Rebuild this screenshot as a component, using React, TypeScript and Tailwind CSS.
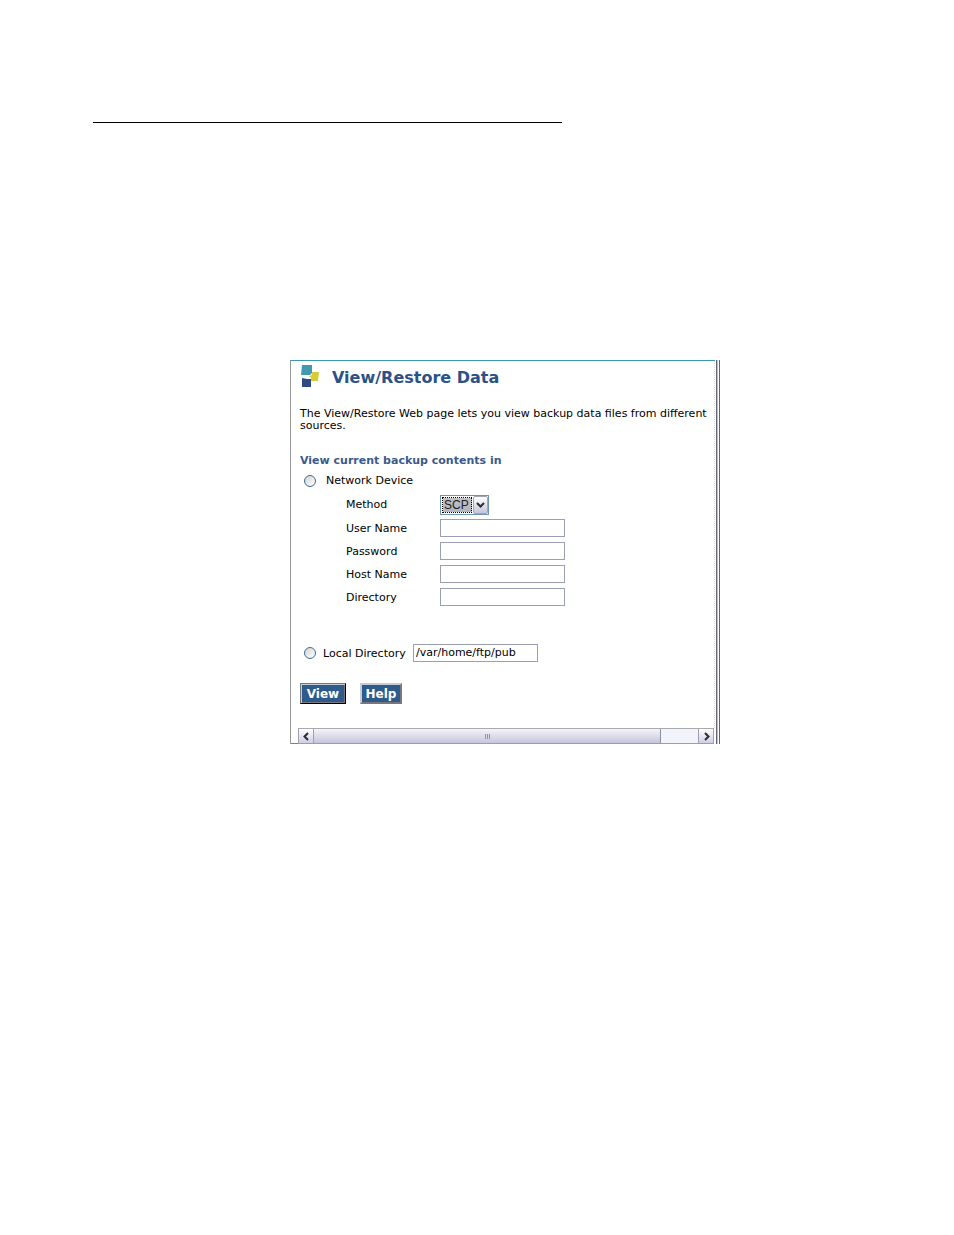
import React, { useState } from 'react';

const fields = [
    { id: 'user', label: 'User Name', type: 'text' },
    { id: 'password', label: 'Password', type: 'password' },
    { id: 'host', label: 'Host Name', type: 'text' },
    { id: 'directory', label: 'Directory', type: 'text' },
];

const inputClass = 'h-[18px] w-[125px] border border-[#9a9fb4] bg-white px-0.5 pb-0.5 text-[11px] outline-none';
const radioClass =
    'size-3 shrink-0 appearance-none rounded-full border border-[#3f6a94] bg-linear-to-br from-[#d4d4d0] to-white checked:border-4';

function Logo() {
    return (
        <svg className="h-[22px] w-[18px] shrink-0" viewBox="0 0 18 22" aria-hidden="true">
            <path d="M1 0h10v8L9 10H0z" fill="#4099ad" />
            <path d="M11 7h7l-1 9h-7v-4H8l2-2h1z" fill="#d5cb3b" />
            <path d="M1 13l5 1h4v8H1z" fill="#2f4b82" />
        </svg>
    );
}

function Arrow({ className, d }: { className: string; d: string }) {
    return (
        <svg className={className} viewBox="0 0 9 9" fill="none" stroke="#2b2b35" strokeWidth="2" aria-hidden="true">
            <path d={d} />
        </svg>
    );
}

function ScrollBar() {
    return (
        <div className="flex h-4 border-y border-t-[#a9a9ae] border-b-[#9d9da6] bg-[#f3f3fb]">
            <button aria-label="Scroll left" className="flex w-4 items-center justify-center border-x border-[#a0a0b4] bg-linear-to-b from-white to-[#cfcfe2]">
                <Arrow className="size-[9px]" d="M6 1 2.5 4.5 6 8" />
            </button>
            <div className="flex w-[347px] items-center justify-center gap-px border-r border-[#8d8da6] bg-linear-to-b from-[#f4f4f8] to-[#c6c6dc]">
                <span className="h-[5px] w-px bg-[#9292a0]" />
                <span className="h-[5px] w-px bg-[#9292a0]" />
                <span className="h-[5px] w-px bg-[#9292a0]" />
            </div>
            <button aria-label="Scroll right" className="ml-auto flex w-4 items-center justify-center border-x border-[#a0a0b4] bg-linear-to-b from-white to-[#cfcfe2]">
                <Arrow className="size-[9px]" d="M3 1l3.5 3.5L3 8" />
            </button>
        </div>
    );
}

export default function App() {
    const [source, setSource] = useState('');
    const [path, setPath] = useState('/var/home/ftp/pub');

    return (
        <main className="min-h-screen bg-white pt-[122px] pr-8 pb-8 pl-[93px] font-['DejaVu_Sans',sans-serif] text-[11px] leading-3 text-black">
            <hr className="max-w-[469px] border-black" />

            <section className="mt-[237px] ml-[197px] flex max-w-[430px]">
                <form
                    className="min-w-0 grow border-t border-l border-t-[#3a98b4] border-l-[#999999]"
                    onSubmit={(e) => e.preventDefault()}
                >
                    <div className="border-r border-dotted border-[#dcdcc0] pr-1.5 pl-[9px]">
                        <header className="flex items-start gap-[13px] pt-1 pl-px">
                            <Logo />
                            <h1 className="pt-[5px] text-[16px] leading-4 font-bold text-[#2b5288]">View/Restore Data</h1>
                        </header>

                        <p className="mt-[21px]">
                            The View/Restore Web page lets you view backup data files from different sources.
                        </p>

                        <fieldset className="mt-[23px]">
                            <legend className="font-bold text-[#3b5a8c]">View current backup contents in</legend>

                            <div className="mt-2 flex h-3 items-start gap-2.5 pl-1">
                                <input
                                    id="network"
                                    type="radio"
                                    name="source"
                                    className={radioClass}
                                    checked={source === 'network'}
                                    onChange={() => setSource('network')}
                                />
                                <label htmlFor="network">Network Device</label>
                            </div>

                            <div className="mt-2 flex flex-col gap-[5px] pl-[46px]">
                                <div className="flex h-[19px] items-center">
                                    <label htmlFor="method" className="w-[94px]">
                                        Method
                                    </label>
                                    <div className="relative">
                                        <select
                                            id="method"
                                            className="block h-5 w-[49px] appearance-none border border-[#6f95b5] bg-white bg-linear-to-b from-[#c0c0c4] to-[#b4b4c0] bg-[length:29px_14px] bg-position-[2px_2px] bg-no-repeat pl-[3px] font-['Liberation_Sans',sans-serif] text-[12px] text-[#222222] outline-none"
                                        >
                                            <option>SCP</option>
                                        </select>
                                        <span className="pointer-events-none absolute top-[2px] left-[2px] h-4 w-[30px] border border-dotted border-black" />
                                        <span className="pointer-events-none absolute top-px right-px flex h-[18px] w-[15px] items-center justify-center rounded-xs border border-[#a5a5b5] bg-linear-to-b from-white to-[#c6c6da]">
                                            <Arrow className="size-[9px]" d="M1 3l3.500 3.500L8 3" />
                                        </span>
                                    </div>
                                </div>
                                {fields.map((field) => (
                                    <div key={field.id} className="flex items-center">
                                        <label htmlFor={field.id} className="w-[94px] pt-0.5">
                                            {field.label}
                                        </label>
                                        <input id={field.id} type={field.type} className={inputClass} />
                                    </div>
                                ))}
                            </div>

                            <div className="mt-[38px] flex items-center pl-1">
                                <input
                                    id="local"
                                    type="radio"
                                    name="source"
                                    className={radioClass}
                                    checked={source === 'local'}
                                    onChange={() => setSource('local')}
                                />
                                <label htmlFor="local" className="w-[97px] pt-0.5 pl-[7px]">
                                    Local Directory
                                </label>
                                <input
                                    type="text"
                                    aria-label="Local directory path"
                                    className={inputClass}
                                    value={path}
                                    onChange={(e) => setPath(e.target.value)}
                                />
                            </div>
                        </fieldset>

                        <div className="mt-[21px] flex gap-3.5 pb-6">
                            <button
                                type="submit"
                                className="h-[21px] w-[46px] border border-t-[#777777] border-r-black border-b-black border-l-[#777777] bg-[#2f5a8c] text-[12px] font-bold text-white shadow-[inset_1px_1px_0_#c8ccd4,inset_-1px_-1px_0_#77777d]"
                            >
                                View
                            </button>
                            <button
                                type="button"
                                className="h-[21px] w-[42px] border-2 border-t-[#c8ccd4] border-r-[#77777d] border-b-[#77777d] border-l-[#c8ccd4] bg-[#2f5a8c] text-[12px] font-bold text-white"
                            >
                                Help
                            </button>
                        </div>
                    </div>

                    <div className="flex pr-px">
                        <div className="w-[7px] border-b border-[#3a98b4]" />
                        <div className="grow">
                            <ScrollBar />
                        </div>
                    </div>
                </form>
                <div className="ml-px w-1 border-x border-x-[#62627c] bg-white shadow-[inset_1px_0_0_#c0c0cc]" />
            </section>
        </main>
    );
}
